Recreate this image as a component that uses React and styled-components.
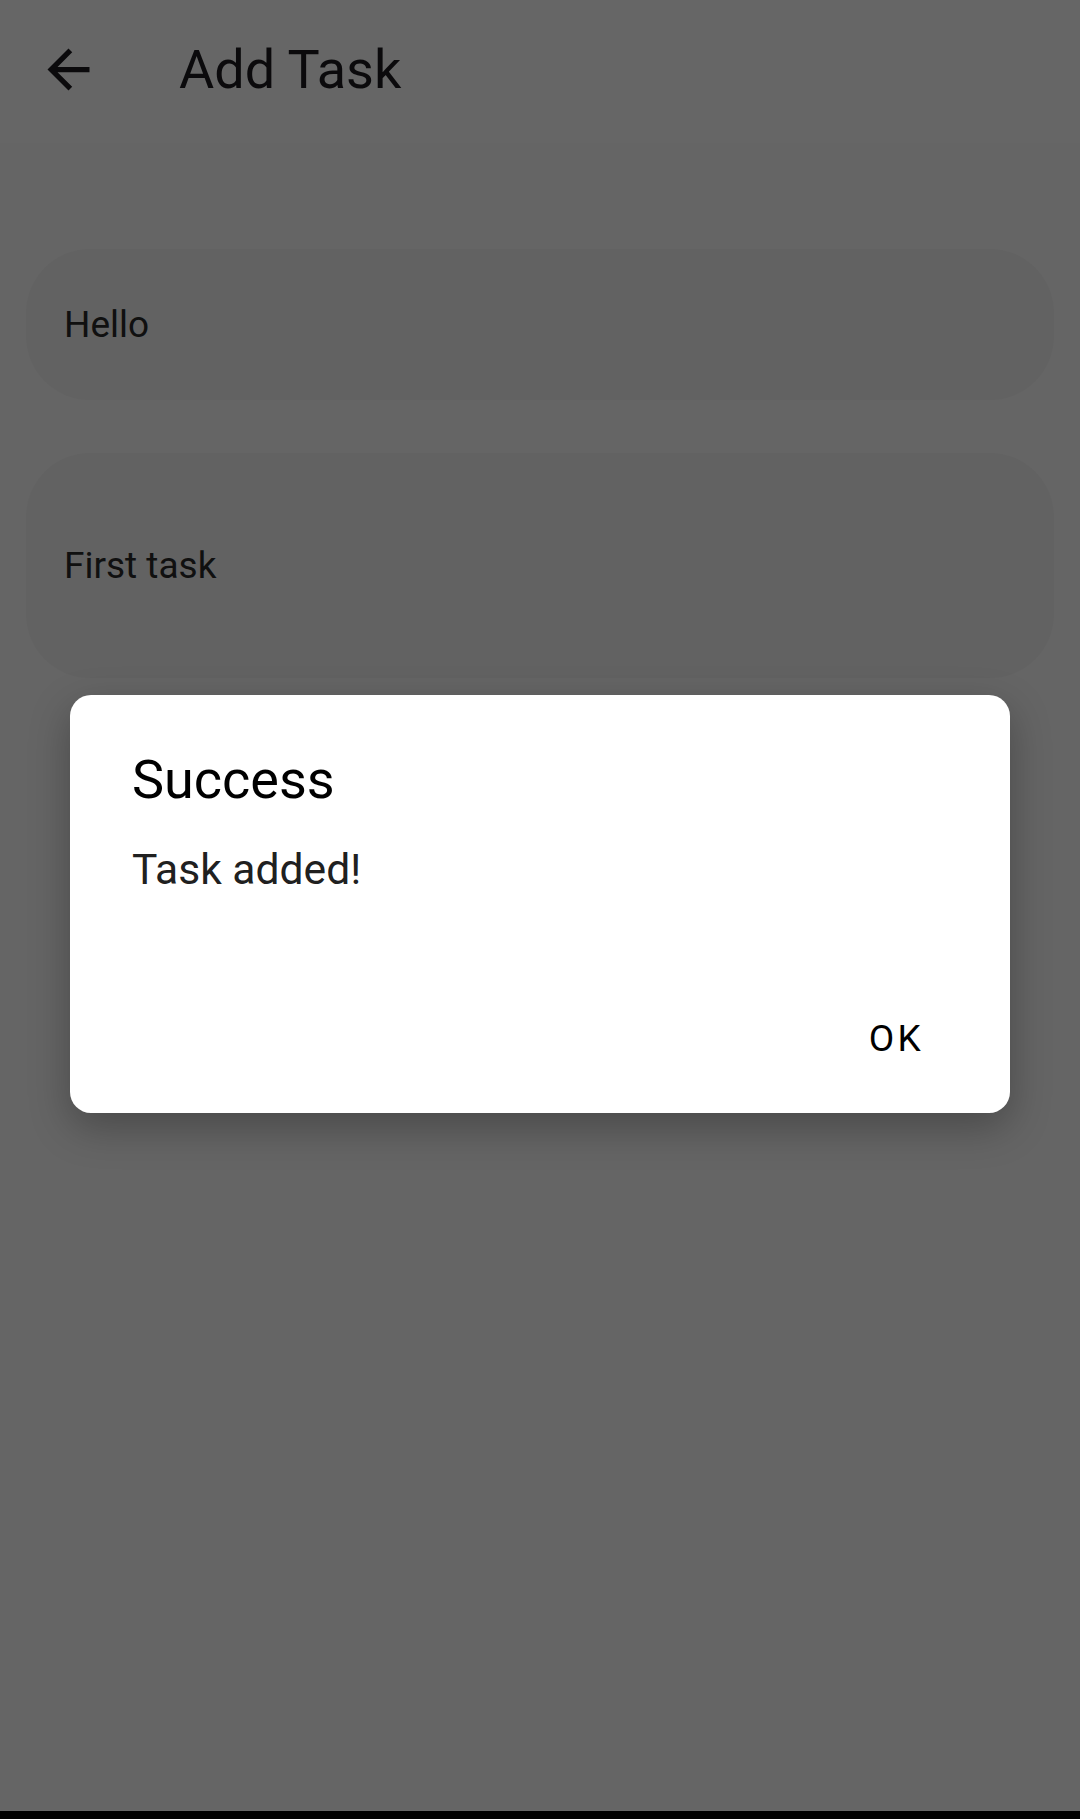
import React from 'react'
import styled, { createGlobalStyle } from 'styled-components'

const GlobalStyle = createGlobalStyle`
    html, body {
        margin: 0;
        padding: 0;
    }
    body {
        font-family: Roboto, "Noto Sans", Arial, sans-serif;
        background: #000;
    }
`;

const Screen = styled.div`
    position: relative;
    height: 100vh;
    display: flex;
    flex-direction: column;
    background: #fcfcfc;
`;

const Content = styled.div`
    position: relative;
    flex: 1;
    display: flex;
    flex-direction: column;
`;

const Header = styled.header`
    height: 143px;
    box-sizing: border-box;
    padding: 38px 0 0 37px;
    background: #fff;
    display: flex;
    align-items: flex-start;
    gap: 79px;
`;

const BackBtn = styled.button`
    width: 63px;
    height: 63px;
    padding: 0;
    border: none;
    background: transparent;
    display: flex;
    svg{
        width: 63px;
        height: 63px;
    }
`;

const Title = styled.h1`
    margin: 0;
    font-size: 54px;
    font-weight: 400;
    line-height: 63px;
    color: #1c1b1f;
`;

const Form = styled.div`
    padding: 106px 26px 0;
    display: flex;
    flex-direction: column;
    gap: 53px;
`;

const Field = styled.div`
    height: ${p => p.$tall ? '225px' : '151px'};
    box-sizing: border-box;
    padding-left: 38px;
    border-radius: 64px;
    background: #f5f5f5;
    display: flex;
    align-items: center;
    font-size: 37px;
    color: #2a2a2a;
`;

const Overlay = styled.div`
    position: absolute;
    inset: 0;
    background: rgba(0, 0, 0, 0.6);
    display: flex;
    align-items: center;
    justify-content: center;
    padding-bottom: 4px;
`;

const Dialog = styled.div`
    width: 940px;
    background: #fff;
    border-radius: 21px;
    box-shadow: 0 14px 40px rgba(0, 0, 0, 0.28);
    padding: 53px 0 0;
    display: flex;
    flex-direction: column;
`;

const DialogTitle = styled.h2`
    margin: 0 62px;
    font-size: 54px;
    font-weight: 400;
    line-height: 63px;
    color: #000;
`;

const Message = styled.p`
    margin: 33px 62px 0;
    font-size: 42.6px;
    line-height: 50px;
    color: #202020;
`;

const Actions = styled.div`
    margin-top: 103px;
    padding: 0 60px 32px;
    display: flex;
    justify-content: flex-end;
`;

const TextBtn = styled.button`
    border: none;
    background: transparent;
    padding: 20px 26px;
    font-family: inherit;
    font-size: 37px;
    font-weight: 400;
    line-height: 44px;
    letter-spacing: 3.3px;
    color: #000;
`;

const NavBar = styled.div`
    height: 8px;
    background: #000;
`;

const ArrowBack = () => (
    <svg viewBox="0 0 24 24" fill="#1c1b1f">
        <path d="M20 11H7.83l5.59-5.59L12 4l-8 8 8 8 1.41-1.41L7.83 13H20v-2z" />
    </svg>
);

const App = () => {
  return (
    <>
        <GlobalStyle />
        <Screen>
            <Content>
                <Header>
                    <BackBtn><ArrowBack /></BackBtn>
                    <Title>Add Task</Title>
                </Header>
                <Form>
                    <Field>Hello</Field>
                    <Field $tall>First task</Field>
                </Form>

                <Overlay>
                    <Dialog>
                        <DialogTitle>Success</DialogTitle>
                        <Message>Task added!</Message>
                        <Actions>
                            <TextBtn>OK</TextBtn>
                        </Actions>
                    </Dialog>
                </Overlay>
            </Content>
            <NavBar />
        </Screen>
    </>
  )
}

export default App
